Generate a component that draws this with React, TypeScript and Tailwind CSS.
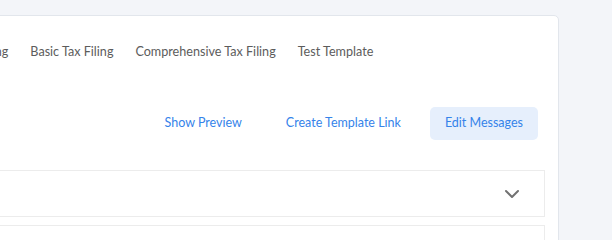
import { ChevronDown } from 'lucide-react'

export default function App() {
  const tabs = ['Standard Tax Filing', 'Basic Tax Filing', 'Comprehensive Tax Filing', 'Test Template']
  const actions = ['Show Preview', 'Create Template Link']

  return (
    <div className="w-[612px] h-[240px] overflow-hidden bg-[#f3f5f9] pt-[15px] font-['Lato',sans-serif]">
      <div className="ml-[-240px] w-[799px] h-[260px] bg-white border border-[#e2e6ec] rounded-[5px] pr-[13px]">
        {/* Template tabs */}
        <div className="flex items-center gap-[22px] mt-[28px] h-[16px] ml-[144px] text-[12.6px] leading-[16px] text-[#5c5c5c]">
          {tabs.map((tab) => (
            <span key={tab} className="whitespace-nowrap">
              {tab}
            </span>
          ))}
        </div>

        {/* Actions */}
        <div className="flex justify-end gap-[14px] mt-[47px] pr-[7px]">
          {actions.map((a) => (
            <button key={a} className="h-[33px] px-[15px] text-[12.5px] text-[#3583ea] rounded-[5px]">
              {a}
            </button>
          ))}
          <button className="h-[33px] px-[15px] text-[12.5px] text-[#3583ea] bg-[#e6effc] rounded-[5px]">
            Edit Messages
          </button>
        </div>

        {/* Sections */}
        <div className="mt-[30px] h-[47px] border border-[#ececec] flex items-center justify-end pr-[20px]">
          <ChevronDown size={24} strokeWidth={2} className="text-[#727272]" />
        </div>
        <div className="mt-[8px] h-[60px] border border-[#ececec]"></div>
      </div>
    </div>
  )
}
